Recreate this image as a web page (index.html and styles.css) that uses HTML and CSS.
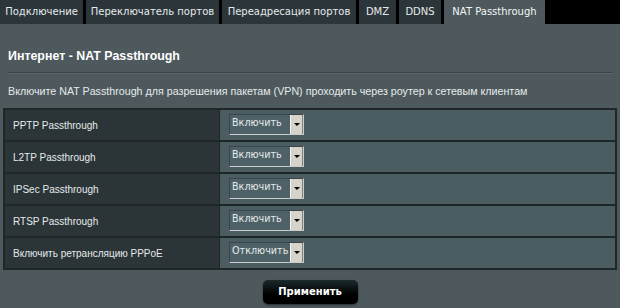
FILE: index.html
```html
<!DOCTYPE html>
<html lang="ru">
<head>
    <meta charset="UTF-8">
    <title>NAT Passthrough</title>
    <link rel="stylesheet" href="styles.css">
</head>
<body>
    <div class="tabs">
        <div class="tab" style="width: 83px">Подключение</div>
        <div class="tab" style="width: 133px">Переключатель портов</div>
        <div class="tab" style="width: 134px">Переадресация портов</div>
        <div class="tab" style="width: 37px">DMZ</div>
        <div class="tab" style="width: 42px">DDNS</div>
        <div class="tab active" style="width: 101px">NAT Passthrough</div>
    </div>

    <div class="content">
        <h1 class="title">Интернет - NAT Passthrough</h1>
        <div class="divider"></div>
        <p class="desc">Включите NAT Passthrough для разрешения пакетам (VPN) проходить через роутер к сетевым клиентам</p>

        <table class="settings">
            <tr>
                <th>PPTP Passthrough</th>
                <td><div class="select"><span>Включить</span><i class="arrow"></i></div></td>
            </tr>
            <tr>
                <th>L2TP Passthrough</th>
                <td><div class="select"><span>Включить</span><i class="arrow"></i></div></td>
            </tr>
            <tr>
                <th>IPSec Passthrough</th>
                <td><div class="select"><span>Включить</span><i class="arrow"></i></div></td>
            </tr>
            <tr>
                <th>RTSP Passthrough</th>
                <td><div class="select"><span>Включить</span><i class="arrow"></i></div></td>
            </tr>
            <tr>
                <th>Включить ретрансляцию PPPoE</th>
                <td><div class="select"><span>Отключить</span><i class="arrow"></i></div></td>
            </tr>
        </table>

        <div class="actions">
            <a class="button">Применить</a>
        </div>
    </div>
</body>
</html>
```

FILE: styles.css
```css
:root {
    --page-bg: #4d595d;
    --tab-bg: #2c363a;
    --cell-dark: #2b3538;
    --cell-light: #4c5d62;
    --line: #1e2628;
    --text: #ffffff;
    --text-soft: #e6eaea;
}

body {
    margin: 0;
    width: 620px;
    height: 308px;
    overflow: hidden;
    background-color: var(--page-bg);
    font-family: 'Liberation Sans', Arial, sans-serif;
    color: var(--text);
}

.tabs {
    display: flex;
    height: 24px;
    background-color: #000;
    gap: 3px;
}

.tab {
    background-color: var(--tab-bg);
    color: var(--text-soft);
    font-family: 'DejaVu Sans', Verdana, sans-serif;
    font-size: 10px;
    line-height: 23px;
    text-align: center;
    white-space: nowrap;
}

.tab.active {
    background-color: var(--page-bg);
    color: #f4f6f6;
}

.content {
    padding: 0 3px;
}

.title {
    margin: 0;
    padding: 24px 0 0 5px;
    font-size: 12.4px;
    font-weight: bold;
    line-height: 16px;
}

.divider {
    margin: 8px 4px 0 5px;
    height: 1px;
    background-color: #3b4649;
    border-bottom: 1px solid #5a6569;
}

.desc {
    margin: 0;
    padding: 10px 0 0 5px;
    font-size: 10.7px;
    line-height: 14px;
    color: var(--text-soft);
}

.settings {
    margin-top: 10px;
    width: 614px;
    border-collapse: collapse;
    border: 2px solid var(--line);
}

.settings th,
.settings td {
    height: 30px;
    padding: 0;
    border-top: 2px solid var(--line);
}

.settings th {
    width: 206px;
    padding-left: 8px;
    background-color: var(--cell-dark);
    color: var(--text-soft);
    font-size: 10px;
    font-weight: normal;
    text-align: left;
    border-right: 1px solid var(--line);
}

.settings td {
    background-color: var(--cell-light);
    padding-left: 9px;
}

.select {
    display: flex;
    align-items: stretch;
    width: 73px;
    height: 19px;
    margin-top: -1px;
    border-top: 1px solid #3a4649;
    border-left: 1px solid #3a4649;
    border-right: 1px solid #c7cccc;
    border-bottom: 1px solid #c7cccc;
    background-color: #4e6166;
}

.select span {
    flex: 1;
    padding: 0 0 0 2px;
    font-family: 'DejaVu Sans', Verdana, sans-serif;
    font-size: 9.6px;
    line-height: 15px;
    color: #e4ecec;
    white-space: nowrap;
}

.arrow {
    position: relative;
    width: 11px;
    background-color: #d6d3cb;
    border-left: 1px solid #f4f4f0;
    border-right: 1px solid #808080;
}

.arrow::after {
    content: "";
    position: absolute;
    left: 3px;
    top: 8px;
    border-left: 3px solid transparent;
    border-right: 3px solid transparent;
    border-top: 3px solid #000;
}

.actions {
    display: flex;
    justify-content: center;
    padding-top: 10px;
}

.button {
    display: inline-block;
    width: 95px;
    height: 24px;
    border-radius: 5px;
    background: linear-gradient(#1c2a2c, #000 60%);
    box-shadow: 0 1px 2px rgba(0, 0, 0, 0.5);
    color: #fff;
    font-family: 'DejaVu Sans', Verdana, sans-serif;
    font-size: 10px;
    font-weight: bold;
    line-height: 24px;
    text-align: center;
    text-decoration: none;
}
```
